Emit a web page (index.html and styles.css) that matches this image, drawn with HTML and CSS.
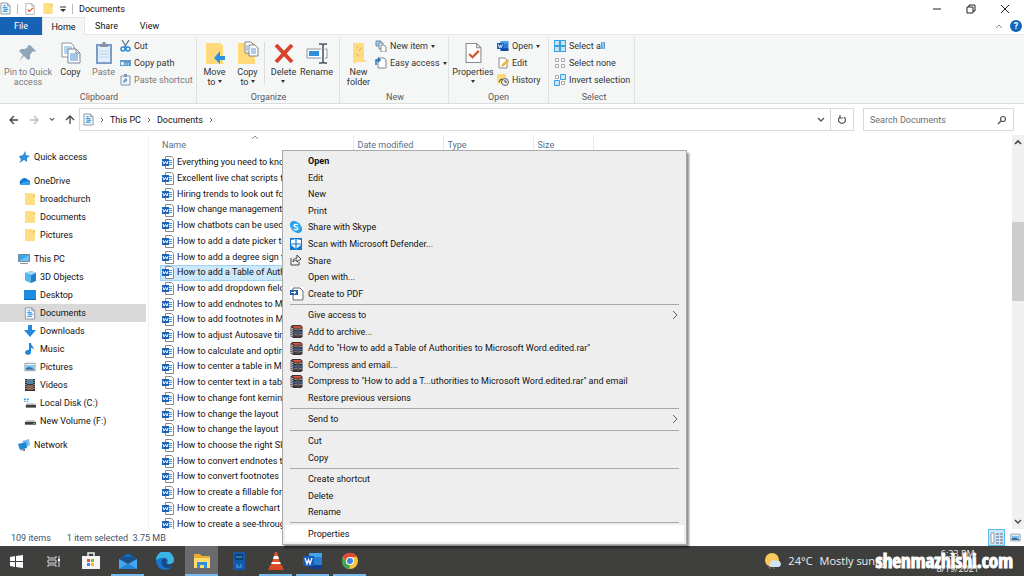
FILE: index.html
```html
<!DOCTYPE html>
<html lang="en">
<head>
    <meta charset="UTF-8">
    <meta name="viewport" content="width=device-width, initial-scale=1.0">
    <title>Documents</title>
    <link rel="stylesheet" href="styles.css">
</head>
<body>
    <!-- Shared icons -->
    <svg class="sprite" aria-hidden="true">
        <symbol id="i-doc" viewBox="0 0 12 14">
            <path d="M1 1h7l3 3v9H1z" fill="#f4f8fb" stroke="#8b949b"/>
            <path d="M8 1v3h3" fill="none" stroke="#8b949b"/>
            <path d="M3 6h5M4 8h5M3 10h5M4 4h2" stroke="#4aa3df" stroke-width="1.4"/>
        </symbol>
        <symbol id="i-check" viewBox="0 0 16 20">
            <path d="M1 1h10l4 4v14H1z" fill="#fff" stroke="#8a8a8a"/>
            <path d="M11 1v4h4" fill="none" stroke="#8a8a8a"/>
            <path d="M4 11l3 3 6-6" fill="none" stroke="#d6502a" stroke-width="2"/>
        </symbol>
        <symbol id="i-folder" viewBox="0 0 12 14">
            <path d="M1 1h8v1h2v11H1z" fill="#ffdf85"/>
            <path d="M9 2h2v3H9z" fill="#f3cb62"/>
        </symbol>
        <symbol id="i-word" viewBox="0 0 12 13">
            <path d="M3.500.500h6l2 2v10h-8z" fill="#fff" stroke="#858b91"/>
            <path d="M7 4.500h3M7 6.500h3M7 8.500h3" stroke="#4f9be0"/>
            <path d="M0 3h7v7H0z" fill="#1d62b7"/>
            <path d="M1 5l1 3 1.500-2.500L5 8l1-3" fill="none" stroke="#fff"/>
        </symbol>
        <symbol id="i-wordapp" viewBox="0 0 20 16">
            <path d="M6 0h13v16H6z" fill="#2b7cd3"/>
            <path d="M6 0h13v4H6z" fill="#41a5ee"/>
            <path d="M6 12h13v4H6z" fill="#103f91"/>
            <path d="M0 3h11v10H0z" fill="#185abd"/>
            <path d="M2 5l2 6 1.500-4.500L7 11l2-6" fill="none" stroke="#fff" stroke-width="1.300"/>
        </symbol>
        <symbol id="i-pages" viewBox="0 0 20 22">
            <path d="M1 1h9l3 3v11H1z" fill="#fff" stroke="#8996a3"/>
            <path d="M3 5h8M3 7h8M3 9h8M3 11h8" stroke="#6fa8dc"/>
            <path d="M7 7h8l4 4v10H7z" fill="#fff" stroke="#788694"/>
            <path d="M15 7v4h4" fill="none" stroke="#788694"/>
            <path d="M9 12h8M9 14h8M9 16h8M9 18h8" stroke="#4c90d0"/>
        </symbol>
        <symbol id="i-rar" viewBox="0 0 13 14">
            <path d="M2 0h9l2 2v11l-2 1H3L0 12V2z" fill="#3a3034"/>
            <path d="M2 1h9l1 2H4z" fill="#e2553c"/>
            <path d="M4 4h9v1H4z" fill="#c9a9a5"/>
            <path d="M4 7h9v2H4z" fill="#2f6fc0"/>
            <path d="M4 10h9v1H4z" fill="#9a9a9a"/>
            <path d="M0 3l3 1M0 5l3 1M0 7l3 1M0 9l3 1M0 11l3 1" stroke="#ddd"/>
            <path d="M7 3h2v10H7z" fill="#65503d"/>
        </symbol>
        <symbol id="i-picture" viewBox="0 0 13 10">
            <path d="M1 1h11v8H1z" fill="#eaf5fc" stroke="#8b949b"/>
            <path d="M2 3h9v3H2z" fill="#7cc4ee"/>
            <path d="M2 8V6l4-1 5 2v1z" fill="#386a9c"/>
        </symbol>
        <symbol id="i-disk" viewBox="0 0 13 10">
            <path d="M3 4h8l2 3H1z" fill="#c9c9c9"/>
            <path d="M1 6h12v3H1z" fill="#3d3d3d"/>
            <path d="M10 7h2v1h-2z" fill="#9fd7a8"/>
        </symbol>
        <symbol id="i-chevron" viewBox="0 0 6 6">
            <path d="M2 1l2 2-2 2" fill="none" stroke="#555"/>
        </symbol>
        <symbol id="i-down" viewBox="0 0 8 6">
            <path d="M1 1l3 3 3-3" fill="none" stroke="currentColor" stroke-width="1.400"/>
        </symbol>
        <symbol id="i-arrow" viewBox="0 0 10 10">
            <path d="M9 5H1M5 1L1 5l4 4" fill="none" stroke="currentColor" stroke-width="1.300"/>
        </symbol>
        <symbol id="i-submenu" viewBox="0 0 6 10">
            <path d="M1 1l4 4-4 4" fill="none" stroke="#666"/>
        </symbol>
    </svg>

    <div class="window">
        <header class="titlebar">
            <svg width="11" height="13"><use href="#i-doc"/></svg>
            <span class="divider"></span>
            <svg width="12" height="12"><use href="#i-check"/></svg>
            <svg width="12" height="13"><use href="#i-folder"/></svg>
            <svg width="6" height="6" viewBox="0 0 6 6"><path d="M0 1h6" stroke="#333"/><path d="M0 3h6L3 6z" fill="#333"/></svg>
            <span class="divider"></span>
            <h1>Documents</h1>
            <div class="window-controls">
                <button type="button" aria-label="Minimize"><svg width="10" height="10"><path d="M1 5h8" stroke="#222"/></svg></button>
                <button type="button" aria-label="Restore"><svg width="10" height="10"><path d="M1 3h6v6H1zM3 3V1h6v6H7" fill="none" stroke="#222"/></svg></button>
                <button type="button" aria-label="Close"><svg width="10" height="10"><path d="M1 1l8 8M9 1L1 9" stroke="#222"/></svg></button>
            </div>
        </header>

        <nav class="tabs">
            <button type="button" class="tab tab-file">File</button>
            <button type="button" class="tab tab-active">Home</button>
            <button type="button" class="tab">Share</button>
            <button type="button" class="tab">View</button>
            <div class="tabs-end">
                <svg width="8" height="6" viewBox="0 0 8 6"><path d="M1 5l3-3 3 3" fill="none" stroke="#888"/></svg>
                <button type="button" class="help" aria-label="Help">?</button>
            </div>
        </nav>

        <div class="ribbon">
            <section class="group group-clipboard">
                <div class="tools">
                    <button type="button" class="big muted big-wide">
                        <svg width="20" height="22" viewBox="0 0 20 22"><path d="M12 3l6 6-2 1-1-1-3 4v4l-2 1-4-4-5 5 4-6-4-4 2-2h4l3-2-1-1z" fill="#8fa5ba"/></svg>
                        <span>Pin to Quick<br>access</span>
                    </button>
                    <button type="button" class="big">
                        <svg width="20" height="22"><use href="#i-pages"/></svg>
                        <span>Copy</span>
                    </button>
                    <button type="button" class="big muted">
                        <svg width="18" height="22" viewBox="0 0 18 22"><path d="M2 3h14v18H2z" fill="#e3effa" stroke="#7b9cc4" stroke-width="2"/><path d="M5 2h2l1-2h2l1 2h2v3H5z" fill="#8393a3"/><path d="M4 9h10M4 12h10M4 15h10" stroke="#bcd6ee"/></svg>
                        <span>Paste</span>
                    </button>
                    <div class="small-tools">
                        <button type="button" class="small">
                            <svg width="11" height="12" viewBox="0 0 11 12"><path d="M2 0l5 8M9 0L4 8" stroke="#667788" stroke-width="1.300"/><circle cx="3" cy="9" r="2" fill="none" stroke="#2889d6" stroke-width="1.500"/><circle cx="8" cy="9" r="2" fill="none" stroke="#2889d6" stroke-width="1.500"/></svg>
                            Cut
                        </button>
                        <button type="button" class="small">
                            <svg width="11" height="12" viewBox="0 0 11 12"><path d="M0 3h11v6H0z" fill="#5c9ccc"/><path d="M1 5l1 3 1-3 1 3M6 7h1M8 7h1" fill="none" stroke="#fff"/></svg>
                            Copy path
                        </button>
                        <button type="button" class="small muted">
                            <svg width="11" height="12" viewBox="0 0 11 12"><path d="M1 2h9v9H1z" fill="#eef5fb" stroke="#7b95ae"/><path d="M4 0h3v3H4z" fill="#7b95ae"/><path d="M4 9V6h3M5 4l2 2-2 2" fill="none" stroke="#4c82b6"/></svg>
                            Paste shortcut
                        </button>
                    </div>
                </div>
                <h2>Clipboard</h2>
            </section>

            <section class="group group-organize">
                <div class="tools">
                    <button type="button" class="big">
                        <svg width="22" height="24" viewBox="0 0 22 24"><path d="M2 2h15v2h2v19H2z" fill="#ffd97a"/><path d="M21 15h-5v-5l-6 7 6 6v-4h5z" fill="#2f93e0"/></svg>
                        <span>Move<br>to <i class="caret"></i></span>
                    </button>
                    <button type="button" class="big">
                        <svg width="22" height="24" viewBox="0 0 22 24"><path d="M1 2h17v21H1z" fill="#ffd97a"/><path d="M8 1h6l2 2v9H8z" fill="#fff" stroke="#788694"/><path d="M12 4h6l3 3v8h-9z" fill="#fff" stroke="#788694"/><path d="M14 8h5M14 10h5M14 12h5M9 5h2M9 7h2M9 9h2" stroke="#5c9cd6"/></svg>
                        <span>Copy<br>to <i class="caret"></i></span>
                    </button>
                    <span class="tool-divider"></span>
                    <button type="button" class="big">
                        <svg width="20" height="22" viewBox="0 0 20 22"><path d="M2 3l16 17M18 3L2 20" stroke="#d8442b" stroke-width="4"/></svg>
                        <span>Delete<br><i class="caret"></i></span>
                    </button>
                    <button type="button" class="big">
                        <svg width="22" height="22" viewBox="0 0 22 22"><path d="M15 7H1v9h14M19 7h2v9h-2" fill="#fff" stroke="#8696a5"/><path d="M3 9h10v5H3z" fill="#2f8fdd"/><path d="M13 2h3l1 1 1-1h3M13 21h3l1-1 1 1h3M17 3v17" fill="none" stroke="#45525e" stroke-width="1.500"/></svg>
                        <span>Rename</span>
                    </button>
                </div>
                <h2>Organize</h2>
            </section>

            <section class="group group-new">
                <div class="tools">
                    <button type="button" class="big">
                        <svg width="18" height="22" viewBox="0 0 18 22"><path d="M3 1h11v17h2v2h-9l-2 2-2-2z" fill="#ffdc83"/><path d="M6 4l2 2M11 6l-2 3M6 12l3 2" stroke="#dcae4f"/></svg>
                        <span>New<br>folder</span>
                    </button>
                    <div class="small-tools">
                        <button type="button" class="small">
                            <svg width="12" height="12" viewBox="0 0 12 12"><path d="M1 1h5v5H1z" fill="#a8cbea" stroke="#6d8dad"/><path d="M4 3h4v6H4z" fill="#fff" stroke="#6d8dad"/><path d="M6 5h3l2 2v5H6z" fill="#fff" stroke="#788694"/></svg>
                            New item <i class="caret"></i>
                        </button>
                        <button type="button" class="small">
                            <svg width="12" height="12" viewBox="0 0 12 12"><path d="M3 1h6l2 2v8H3z" fill="#fff" stroke="#788694"/><path d="M1 8V3h4M3 1l2 2-2 2" fill="none" stroke="#2474bd" stroke-width="1.500"/></svg>
                            Easy access <i class="caret"></i>
                        </button>
                    </div>
                </div>
                <h2>New</h2>
            </section>

            <section class="group group-open">
                <div class="tools">
                    <button type="button" class="big big-medium">
                        <svg width="17" height="22"><use href="#i-check"/></svg>
                        <span>Properties<br><i class="caret"></i></span>
                    </button>
                    <div class="small-tools">
                        <button type="button" class="small">
                            <svg width="12" height="12"><use href="#i-wordapp"/></svg>
                            Open <i class="caret"></i>
                        </button>
                        <button type="button" class="small">
                            <svg width="12" height="12" viewBox="0 0 12 12"><path d="M2 1h6l2 2v8H2z" fill="#fff" stroke="#8a8a8a"/><path d="M4 10l1-3 6-5 1 2-5 5z" fill="#efb63c"/></svg>
                            Edit
                        </button>
                        <button type="button" class="small">
                            <svg width="12" height="12" viewBox="0 0 12 12"><path d="M0 0h9v10H0z" fill="#ffda7b"/><circle cx="8" cy="8" r="3.500" fill="#e8e8e8" stroke="#666"/><path d="M8 6v2h2M2 8l2-3 2 1" fill="none" stroke="#444"/></svg>
                            History
                        </button>
                    </div>
                </div>
                <h2>Open</h2>
            </section>

            <section class="group group-select">
                <div class="tools">
                    <div class="small-tools">
                        <button type="button" class="small">
                            <svg width="12" height="12" viewBox="0 0 12 12"><path d="M0 0h12v12H0z" fill="#3aa0e0"/><path d="M1 1h4v4H1zM7 1h4v4H7zM1 7h4v4H1zM7 7h4v4H7z" fill="#c6e6f8"/></svg>
                            Select all
                        </button>
                        <button type="button" class="small">
                            <svg width="12" height="12" viewBox="0 0 12 12"><path d="M1.500 1.500h3v3h-3zM7.500 1.500h3v3h-3zM1.500 7.500h3v3h-3zM7.500 7.500h3v3h-3z" fill="#fff" stroke="#aaa"/></svg>
                            Select none
                        </button>
                        <button type="button" class="small">
                            <svg width="12" height="12" viewBox="0 0 12 12"><path d="M1.500 1.500h3v3h-3zM7.500 7.500h3v3h-3z" fill="#fff" stroke="#aaa"/><path d="M6.500.500h5v5h-5zM.500 6.500h5v5h-5z" fill="#c6e6f8" stroke="#3aa0e0"/></svg>
                            Invert selection
                        </button>
                    </div>
                </div>
                <h2>Select</h2>
            </section>
        </div>

        <div class="address-row">
            <div class="history">
                <button type="button" aria-label="Back"><svg width="10" height="10"><use href="#i-arrow"/></svg></button>
                <button type="button" class="faded" aria-label="Forward"><svg class="flip" width="10" height="10"><use href="#i-arrow"/></svg></button>
                <button type="button" aria-label="Recent locations"><svg width="6" height="5"><use href="#i-down"/></svg></button>
                <button type="button" aria-label="Up"><svg class="up" width="10" height="10"><use href="#i-arrow"/></svg></button>
            </div>
            <div class="address">
                <svg width="11" height="13"><use href="#i-doc"/></svg>
                <svg width="6" height="6"><use href="#i-chevron"/></svg>
                <a href="#">This PC</a>
                <svg width="6" height="6"><use href="#i-chevron"/></svg>
                <a href="#">Documents</a>
                <svg width="6" height="6"><use href="#i-chevron"/></svg>
                <button type="button" class="address-drop" aria-label="Previous locations"><svg width="8" height="6"><use href="#i-down"/></svg></button>
                <button type="button" class="refresh" aria-label="Refresh"><svg width="10" height="10" viewBox="0 0 10 10"><path d="M7 2a3.500 3.500 0 1 1-4 0M3 0v3h3" fill="none" stroke="#555" stroke-width="1.200"/></svg></button>
            </div>
            <label class="search">
                <input type="search" placeholder="Search Documents" aria-label="Search Documents">
                <svg width="10" height="10" viewBox="0 0 10 10"><circle cx="6" cy="4" r="2.500" fill="none" stroke="#555" stroke-width="1.200"/><path d="M4 6L1 9" stroke="#555" stroke-width="1.500"/></svg>
            </label>
        </div>

        <main class="explorer">
            <nav class="tree">
                <ul>
                    <li><a href="#"><svg width="12" height="12" viewBox="0 0 12 12"><path d="M7 0l1 4 4 1-3 2 0 4-3-2-3 2-2 1 2-3-2-4 4-1z" fill="#2f8fdd"/></svg>Quick access</a></li>
                </ul>
                <ul>
                    <li><a href="#"><svg width="12" height="12" viewBox="0 0 12 12"><path d="M3 10a3 3 0 0 1 0-5 4 4 0 0 1 7 0 2.500 2.500 0 0 1 0 5z" fill="#1378cf"/><path d="M5 7l5-1a2 2 0 0 1 0 4H2z" fill="#33a2ec"/></svg>OneDrive</a></li>
                    <li class="child"><a href="#"><svg width="12" height="14"><use href="#i-folder"/></svg>broadchurch</a></li>
                    <li class="child"><a href="#"><svg width="12" height="14"><use href="#i-folder"/></svg>Documents</a></li>
                    <li class="child"><a href="#"><svg width="12" height="14"><use href="#i-folder"/></svg>Pictures</a></li>
                </ul>
                <ul>
                    <li><a href="#"><svg width="12" height="12" viewBox="0 0 12 12"><path d="M0 1h12v8H0z" fill="#7c8c98"/><path d="M1 2h10v6H1z" fill="#37a6ec"/><path d="M1 8l10-6v6z" fill="#6dc2f5"/><path d="M2 10h8v1H2z" fill="#8b98a3"/></svg>This PC</a></li>
                    <li class="child"><a href="#"><svg width="12" height="12" viewBox="0 0 12 12"><path d="M1 2l6-2 5 2v8l-5 2-6-3z" fill="#1f83cb"/><path d="M1 2l6-2 5 2-5 2z" fill="#a4dcf8"/><path d="M1 2l6 2v8L1 9z" fill="#56b5ea"/></svg>3D Objects</a></li>
                    <li class="child"><a href="#"><svg width="12" height="12" viewBox="0 0 12 12"><path d="M0 1h12v10H0z" fill="#1d8ce0"/><path d="M0 10h12v1H0z" fill="#1464a8"/></svg>Desktop</a></li>
                    <li class="child selected"><a href="#"><svg width="12" height="13"><use href="#i-doc"/></svg>Documents</a></li>
                    <li class="child"><a href="#"><svg width="12" height="12" viewBox="0 0 12 12"><path d="M4 0h4v5h4l-6 7-6-7h4z" fill="#2787d8"/></svg>Downloads</a></li>
                    <li class="child"><a href="#"><svg width="12" height="12" viewBox="0 0 12 12"><path d="M5 0h2c0 3 3 3 3 7-1-2-2-2-3-2v4a3 2.500 0 1 1-2-2z" fill="#2088da"/></svg>Music</a></li>
                    <li class="child"><a href="#"><svg width="12" height="10"><use href="#i-picture"/></svg>Pictures</a></li>
                    <li class="child"><a href="#"><svg width="12" height="12" viewBox="0 0 12 12"><path d="M1 0h10v12H1z" fill="#333"/><path d="M3 0h6v5H3z" fill="#5383a8"/><path d="M3 6h6v5H3z" fill="#8d6653"/><path d="M2 1v10M10 1v10" stroke="#ccc" stroke-dasharray="1 1"/></svg>Videos</a></li>
                    <li class="child"><a href="#"><svg width="12" height="12" viewBox="0 0 13 12"><path d="M0 1h2v2H0zM3 1h2v2H3zM0 4h2v1H0zM3 4h2v1H3z" fill="#26a0e6"/><path d="M3 6h8l2 2H2z" fill="#c9c9c9"/><path d="M2 8h11v3H2z" fill="#3d3d3d"/></svg>Local Disk (C:)</a></li>
                    <li class="child"><a href="#"><svg width="12" height="10"><use href="#i-disk"/></svg>New Volume (F:)</a></li>
                </ul>
                <ul>
                    <li><a href="#"><svg width="12" height="12" viewBox="0 0 12 12"><path d="M4 2l7-2 1 6-3 2z" fill="#80bce8"/><path d="M0 5l8-2 1 6-7 2z" fill="#1f86d0"/><path d="M2 11l5-1v2z" fill="#667"/></svg>Network</a></li>
                </ul>
            </nav>

            <div class="files">
                <svg class="sort" width="8" height="6" viewBox="0 0 8 6"><path d="M1 4l3-3 3 3" fill="none" stroke="#888"/></svg>
                <table>
                    <colgroup>
                        <col class="col-name">
                        <col class="col-date">
                        <col class="col-date">
                        <col class="col-size">
                    </colgroup>
                    <thead>
                        <tr><th>Name</th><th>Date modified</th><th>Type</th><th>Size</th></tr>
                    </thead>
                    <tbody>
                        <tr><td><svg width="12" height="13"><use href="#i-word"/></svg>Everything you need to know</td></tr>
                        <tr><td><svg width="12" height="13"><use href="#i-word"/></svg>Excellent live chat scripts for</td></tr>
                        <tr><td><svg width="12" height="13"><use href="#i-word"/></svg>Hiring trends to look out for</td></tr>
                        <tr><td><svg width="12" height="13"><use href="#i-word"/></svg>How change management</td></tr>
                        <tr><td><svg width="12" height="13"><use href="#i-word"/></svg>How chatbots can be used</td></tr>
                        <tr><td><svg width="12" height="13"><use href="#i-word"/></svg>How to add a date picker to</td></tr>
                        <tr><td><svg width="12" height="13"><use href="#i-word"/></svg>How to add a degree sign to</td></tr>
                        <tr class="selected"><td><svg width="12" height="13"><use href="#i-word"/></svg>How to add a Table of Authorities</td></tr>
                        <tr><td><svg width="12" height="13"><use href="#i-word"/></svg>How to add dropdown fields</td></tr>
                        <tr><td><svg width="12" height="13"><use href="#i-word"/></svg>How to add endnotes to Microsoft</td></tr>
                        <tr><td><svg width="12" height="13"><use href="#i-word"/></svg>How to add footnotes in Microsoft</td></tr>
                        <tr><td><svg width="12" height="13"><use href="#i-word"/></svg>How to adjust Autosave time</td></tr>
                        <tr><td><svg width="12" height="13"><use href="#i-word"/></svg>How to calculate and optimize</td></tr>
                        <tr><td><svg width="12" height="13"><use href="#i-word"/></svg>How to center a table in Microsoft</td></tr>
                        <tr><td><svg width="12" height="13"><use href="#i-word"/></svg>How to center text in a table</td></tr>
                        <tr><td><svg width="12" height="13"><use href="#i-word"/></svg>How to change font kerning</td></tr>
                        <tr><td><svg width="12" height="13"><use href="#i-word"/></svg>How to change the layout</td></tr>
                        <tr><td><svg width="12" height="13"><use href="#i-word"/></svg>How to change the layout</td></tr>
                        <tr><td><svg width="12" height="13"><use href="#i-word"/></svg>How to choose the right SIM</td></tr>
                        <tr><td><svg width="12" height="13"><use href="#i-word"/></svg>How to convert endnotes to</td></tr>
                        <tr><td><svg width="12" height="13"><use href="#i-word"/></svg>How to convert footnotes</td></tr>
                        <tr><td><svg width="12" height="13"><use href="#i-word"/></svg>How to create a fillable form</td></tr>
                        <tr><td><svg width="12" height="13"><use href="#i-word"/></svg>How to create a flowchart</td></tr>
                        <tr><td><svg width="12" height="13"><use href="#i-word"/></svg>How to create a see-through</td></tr>
                    </tbody>
                </table>
            </div>

            <div class="scrollbar">
                <svg width="8" height="6" viewBox="0 0 8 6"><path d="M1 5l3-3 3 3" fill="none" stroke="#444" stroke-width="1.600"/></svg>
                <div class="track"><div class="thumb"></div></div>
                <svg width="8" height="6"><use href="#i-down"/></svg>
            </div>
        </main>

        <footer class="status">
            <span>109 items</span>
            <span>1 item selected&nbsp; 3.75 MB</span>
            <div class="views">
                <button type="button" class="view view-active" aria-label="Details"><svg width="13" height="12" viewBox="0 0 13 12"><path d="M1 1h3v10H1z" fill="#fff" stroke="#999"/><path d="M6 2h3M6 5h3M6 8h3M6 11h3M10 2h3M10 5h3M10 8h3M10 11h3" stroke="#667"/></svg></button>
                <button type="button" class="view" aria-label="Large icons"><svg width="11" height="9"><use href="#i-picture"/></svg></button>
            </div>
        </footer>
    </div>

    <ul class="menu">
        <li><button type="button"><b>Open</b></button></li>
        <li><button type="button">Edit</button></li>
        <li><button type="button">New</button></li>
        <li><button type="button">Print</button></li>
        <li><button type="button"><svg width="12" height="12" viewBox="0 0 12 12"><circle cx="4" cy="4" r="4" fill="#1f9be8"/><circle cx="8" cy="8" r="4" fill="#1f9be8"/><circle cx="6" cy="6" r="5" fill="#31a9f0"/><path d="M8 4c-1-1-4-1-4 .500S8 6 8 7.500 5 9 4 8" fill="none" stroke="#fff" stroke-width="1.300"/></svg>Share with Skype</button></li>
        <li><button type="button"><svg width="12" height="12" viewBox="0 0 12 12"><path d="M0 0h12v12H0z" fill="#1079d4"/><path d="M1 2l5-1 5 1v5l-5 4-5-4z" fill="#fff"/><path d="M6 1v10M1 6h10" stroke="#1079d4" stroke-width="1.200"/></svg>Scan with Microsoft Defender...</button></li>
        <li><button type="button"><svg width="12" height="12" viewBox="0 0 12 12"><path d="M1 4v7h8V8M3 8c0-3 2-4 4-4V1l4 4-4 3V6C5 6 4 7 3 8z" fill="none" stroke="#444"/></svg>Share</button></li>
        <li><button type="button">Open with...</button></li>
        <li><button type="button"><svg width="14" height="14" viewBox="0 0 14 14"><path d="M0 0h14v14H0z" fill="#fff"/><path d="M3 1h7l3 3v9H3z" fill="#fff" stroke="#666"/><path d="M0 3h8v5H0z" fill="#1d5ca8"/><path d="M1 5.500h5M4 4l2 1.500L4 7" fill="none" stroke="#fff"/></svg>Create to PDF</button></li>
        <li class="separator"></li>
        <li><button type="button">Give access to<svg class="submenu" width="6" height="10"><use href="#i-submenu"/></svg></button></li>
        <li><button type="button"><svg width="13" height="13"><use href="#i-rar"/></svg>Add to archive...</button></li>
        <li><button type="button"><svg width="13" height="13"><use href="#i-rar"/></svg>Add to "How to add a Table of Authorities to Microsoft Word.edited.rar"</button></li>
        <li><button type="button"><svg width="13" height="13"><use href="#i-rar"/></svg>Compress and email...</button></li>
        <li><button type="button"><svg width="13" height="13"><use href="#i-rar"/></svg>Compress to "How to add a T...uthorities to Microsoft Word.edited.rar" and email</button></li>
        <li><button type="button">Restore previous versions</button></li>
        <li class="separator"></li>
        <li><button type="button">Send to<svg class="submenu" width="6" height="10"><use href="#i-submenu"/></svg></button></li>
        <li class="separator"></li>
        <li><button type="button">Cut</button></li>
        <li><button type="button">Copy</button></li>
        <li class="separator"></li>
        <li><button type="button">Create shortcut</button></li>
        <li><button type="button">Delete</button></li>
        <li><button type="button">Rename</button></li>
        <li class="separator"></li>
        <li class="hovered"><button type="button">Properties</button></li>
    </ul>

    <div class="taskbar">
        <button type="button" class="app" aria-label="Start"><svg width="13" height="13" viewBox="0 0 13 13"><path d="M0 2l5-1v5H0zM6 1l7-1v6H6zM0 7h5v5l-5-1zM6 7h7v6l-7-1z" fill="#fff"/></svg></button>
        <button type="button" class="app" aria-label="Task view"><svg width="13" height="13" viewBox="0 0 13 13"><path d="M1 1v2h8V1M1 12v-2h8v2M1 5h8v3H1zM12 1v11" fill="none" stroke="#ddd"/><path d="M11 4h2v2h-2z" fill="#fff"/></svg></button>
        <button type="button" class="app" aria-label="Store"><svg width="18" height="18" viewBox="0 0 18 18"><path d="M6 5V1h6v4" fill="none" stroke="#eee" stroke-width="1.500"/><path d="M0 4h18v13H0z" fill="#f4f4f4"/><path d="M5 7h3v3H5z" fill="#e2552c"/><path d="M9 7h3v3H9z" fill="#7db72f"/><path d="M5 11h3v3H5z" fill="#2a94d8"/><path d="M9 11h3v3H9z" fill="#f2b42b"/></svg></button>
        <button type="button" class="app running" aria-label="Mail"><svg width="18" height="16" viewBox="0 0 18 16"><path d="M0 6l9-6 9 6z" fill="#1667b8"/><path d="M2 4h14v5H2z" fill="#174f91"/><path d="M0 6l9 5 9-5v10H0z" fill="#42a8ef"/><path d="M0 16l9-6 9 6z" fill="#2383d6"/></svg></button>
        <button type="button" class="app" aria-label="Edge"><svg width="18" height="18" viewBox="0 0 18 18"><circle cx="9" cy="9" r="9" fill="#1a74cc"/><path d="M0 8a9 9 0 0 1 18 0c0 3-2 4-5 4-2 0-2-1-1-3 0-3-6-5-12-1z" fill="#3bb5e6"/><path d="M6 8c-2 4 1 9 7 8 2 0 3-2 3-3-3 2-6 0-6-3 0-1 1-2 0-3s-3-1-4 1z" fill="#114b91"/><path d="M9 7c2 0 2 2 1 3 0 2 2 3 5 2l3-2v4l-4 0c-3 0-5-2-5-4z" fill="#3f3f3f"/></svg></button>
        <button type="button" class="app running current" aria-label="File Explorer"><svg width="18" height="16" viewBox="0 0 18 16"><path d="M1 1h6l2 2h8v12H1z" fill="#e9ad2d"/><path d="M1 5h16v10H1z" fill="#ffdb71"/><path d="M4 9h10v6h-3v-3H7v3H4z" fill="#2b91dd"/></svg></button>
        <button type="button" class="app" aria-label="Notes"><svg width="14" height="18" viewBox="0 0 14 18"><path d="M1 0h12v18H1z" fill="#135aa6"/><path d="M3 2h8v6H3z" fill="#0e3f77"/><path d="M4 5h6M4 13h2M8 13h2M4 15h6" stroke="#5aa9e8"/></svg></button>
        <button type="button" class="app running" aria-label="VLC"><svg width="16" height="18" viewBox="0 0 16 18"><path d="M7 0h2l4 14H3z" fill="#e5542b"/><path d="M6 4h4l1 3H5zM4 10h8l1 2H3z" fill="#fff"/><path d="M2 13h12l2 5H0z" fill="#d84b26"/></svg></button>
        <button type="button" class="app running" aria-label="Word"><svg width="20" height="16"><use href="#i-wordapp"/></svg></button>
        <button type="button" class="app running" aria-label="Chrome"><svg width="18" height="18" viewBox="0 0 18 18"><circle cx="9" cy="9" r="8" fill="#f5c63b"/><path d="M2 5a8 8 0 0 1 14 0H9L6 11z" fill="#df4b37"/><path d="M2 5l4 7 3 1-1 4A8 8 0 0 1 2 5z" fill="#3fa558"/><circle cx="9" cy="9" r="4" fill="#fff"/><circle cx="9" cy="9" r="3" fill="#3c86e0"/></svg></button>

        <div class="tray">
            <svg width="16" height="16" viewBox="0 0 16 16"><circle cx="7" cy="7" r="7" fill="#fbc95b"/><path d="M6 14a3 3 0 0 1 0-5 3 3 0 0 1 5-1 3 3 0 0 1 3 6z" fill="#cfe4f7"/><path d="M4 14l1 2M8 14l1 2" stroke="#e0603c"/></svg>
            <span>24°C</span>
            <span class="weather">Mostly sunny</span>
            <div class="clock">6:33 PM<br>8/19/2021</div>
        </div>
        <span class="watermark">shenmazhishi.com</span>
    </div>
</body>
</html>
```

FILE: styles.css
```css
* {
    box-sizing: border-box;
}
body {
    display: flex;
    flex-direction: column;
    height: 100vh;
    margin: 0;
    overflow: hidden;
    background-color: #fff;
    color: #111;
    font-family: Roboto, "Open Sans", sans-serif;
    font-size: 9px;
    line-height: 12px;
}
h1, h2 {
    margin: 0;
    font-size: 9px;
    font-weight: normal;
}
ul {
    margin: 0;
    padding: 0;
    list-style: none;
}
a {
    color: inherit;
    text-decoration: none;
}
button {
    padding: 0;
    border: none;
    background: none;
    color: inherit;
    font: inherit;
}
svg {
    display: block;
    flex: none;
}
.sprite {
    position: absolute;
    width: 0;
    height: 0;
}
.window {
    display: flex;
    flex: 1;
    flex-direction: column;
    min-height: 0;
}

/* Title bar and tabs */
.titlebar {
    display: flex;
    align-items: center;
    gap: 6px;
    height: 17px;
}
.divider {
    width: 1px;
    height: 10px;
    background-color: #bbb;
}
.window-controls {
    display: flex;
    gap: 24px;
    margin-left: auto;
    padding-right: 14px;
}
.tabs {
    display: flex;
    height: 18px;
    border-bottom: 1px solid #e4e6e6;
}
.tab {
    width: 43px;
    height: 18px;
}
.tab-file {
    width: 42px;
    background-color: #1663b5;
    color: #fff;
}
.tab-active {
    border: 1px solid #e4e6e6;
    border-bottom: none;
    background-color: #f5f7f7;
}
.tabs-end {
    display: flex;
    align-items: center;
    gap: 7px;
    margin-left: auto;
    padding-right: 2px;
}
.help {
    width: 12px;
    height: 12px;
    border-radius: 50%;
    background-color: #1267bd;
    color: #fff;
    font-weight: bold;
    line-height: 12px;
}

/* Ribbon */
.ribbon {
    display: flex;
    height: 69px;
    padding-top: 2px;
    border-bottom: 1px solid #dcdede;
    background-color: #f5f7f7;
    color: #333;
}
.group {
    display: flex;
    flex-direction: column;
    justify-content: space-between;
    border-right: 1px solid #e1e3e3;
}
.group h2 {
    color: #5a5a5a;
    text-align: center;
}
.group-clipboard {
    width: 197px;
    padding-left: 2px;
}
.group-organize {
    width: 143px;
    padding-left: 1px;
}
.group-new {
    width: 109px;
    padding-left: 2px;
}
.group-open {
    width: 100px;
}
.group-select {
    width: 86px;
    padding-left: 5px;
}
.tools {
    display: flex;
}
.big {
    display: flex;
    flex-direction: column;
    align-items: center;
    width: 33px;
    line-height: 10px;
    white-space: nowrap;
}
.big svg {
    height: 24px;
    margin: 4px 0 2px;
}
.big-medium {
    width: 48px;
}
.big-wide {
    width: 52px;
}
.muted {
    color: #777;
}
.tool-divider {
    width: 1px;
    height: 42px;
    margin: 5px 2px 0 0;
    background-color: #dcdede;
}
.small-tools {
    display: flex;
    flex-direction: column;
    gap: 5px;
    padding-top: 3px;
}
.small {
    display: flex;
    align-items: center;
    gap: 3px;
    white-space: nowrap;
}
.caret {
    display: inline-block;
    border: 2px solid transparent;
    border-top: 3px solid #333;
    border-bottom: none;
    vertical-align: 2px;
}

/* Address row */
.address-row {
    display: flex;
    gap: 9px;
    padding: 4px 10px 4px 9px;
}
.history {
    display: flex;
    flex: none;
    align-items: center;
    justify-content: space-between;
    width: 66px;
    color: #444;
}
.faded {
    color: #bbb;
}
.flip {
    transform: rotate(180deg);
}
.up {
    transform: rotate(90deg);
}
.address {
    display: flex;
    flex: 1;
    align-items: center;
    gap: 5px;
    height: 23px;
    margin-left: -5px;
    padding-left: 3px;
    border: 1px solid #d9d9d9;
}
.address-drop {
    margin-left: auto;
    color: #555;
}
.refresh {
    display: flex;
    align-items: center;
    justify-content: center;
    width: 23px;
    height: 21px;
    border-left: 1px solid #d9d9d9;
}
.search {
    display: flex;
    align-items: center;
    width: 151px;
    padding: 0 6px;
    border: 1px solid #d9d9d9;
}
.search input {
    flex: 1;
    min-width: 0;
    padding: 0;
    border: none;
    outline: none;
    background: none;
    font: inherit;
}
.search input::placeholder {
    color: #6d6d6d;
}

/* Explorer */
.explorer {
    display: flex;
    flex: 1;
    min-height: 0;
}
.tree {
    display: flex;
    flex: none;
    flex-direction: column;
    gap: 6px;
    width: 149px;
    padding: 13px 2px 0 0;
    border-right: 1px solid #f3f3f3;
}
.tree a {
    display: flex;
    align-items: center;
    gap: 4px;
    height: 18px;
    padding-left: 18px;
    white-space: nowrap;
}
.tree .child a {
    padding-left: 24px;
}
.tree .selected {
    background-color: #d9d9d9;
}
.files {
    position: relative;
    flex: 1;
    overflow: hidden;
    padding-left: 11px;
}
.sort {
    position: absolute;
    top: 0;
    left: 102px;
}
table {
    width: 433px;
    height: 397px;
    border-collapse: collapse;
    table-layout: fixed;
}
.col-name {
    width: 193px;
}
.col-date {
    width: 90px;
}
.col-size {
    width: 60px;
}
th {
    height: 20px;
    padding: 4px 4px 0;
    border-right: 1px solid #e8e8e8;
    color: #5b6f88;
    font-weight: normal;
    text-align: left;
    vertical-align: top;
}
th:first-child {
    padding-left: 2px;
}
td {
    padding: 0 0 0 2px;
    overflow: hidden;
    white-space: nowrap;
}
td svg {
    display: inline-block;
    margin-right: 3px;
    vertical-align: middle;
}
tr.selected td {
    background-color: #cce8fb;
    outline: 1px solid #9ed2f5;
    outline-offset: -1px;
}
.scrollbar {
    display: flex;
    flex-direction: column;
    align-items: center;
    width: 12px;
    padding: 4px 0;
    background-color: #f0f0f0;
    color: #444;
}
.track {
    display: flex;
    flex: 1;
    flex-direction: column;
    align-self: stretch;
    padding-top: 77px;
}
.thumb {
    height: 79px;
    background-color: #cdcdcd;
}

/* Status bar */
.status {
    display: flex;
    align-items: center;
    gap: 16px;
    height: 17px;
    padding-left: 11px;
    color: #3d5068;
}
.views {
    display: flex;
    gap: 2px;
    margin-left: auto;
}
.view {
    display: flex;
    align-items: center;
    justify-content: center;
    width: 17px;
    height: 17px;
}
.view-active {
    border: 1px solid #5db9ee;
    background-color: #cbe8fb;
}

/* Context menu */
.menu {
    position: absolute;
    top: 150px;
    bottom: 31px;
    left: 282px;
    z-index: 1;
    display: flex;
    flex-direction: column;
    width: 405px;
    padding: 2px;
    border: 1px solid #a9a9a9;
    background-color: #eee;
    box-shadow: 2px 3px 2px rgba(0, 0, 0, 0.45);
}
.menu li {
    display: flex;
    flex: 1;
}
.menu button {
    position: relative;
    flex: 1;
    padding-left: 23px;
    text-align: left;
    white-space: nowrap;
}
.menu svg {
    position: absolute;
    top: 2px;
    left: 5px;
}
.menu .submenu {
    top: 3px;
    right: 6px;
    left: auto;
}
.menu .separator {
    flex: none;
    height: 1px;
    margin: 2px 5px;
    background-color: #a8a8a8;
}
.menu .hovered {
    background-color: #fff;
}

/* Taskbar */
.taskbar {
    position: relative;
    display: flex;
    gap: 4px;
    height: 30px;
    background-color: #3f3f3e;
    color: #eee;
}
.app {
    display: flex;
    align-items: center;
    justify-content: center;
    width: 33px;
    border: solid transparent;
    border-width: 2px 0;
}
.running {
    border-bottom-color: #76b9ed;
}
.current {
    background-color: #6b6b6f;
}
.tray {
    display: flex;
    align-items: center;
    gap: 7px;
    margin-left: auto;
    padding-right: 45px;
    font-family: "Open Sans", sans-serif;
    font-size: 11px;
}
.clock {
    margin-left: 42px;
    font-size: 9px;
    line-height: 15px;
    text-align: center;
}
.watermark {
    position: absolute;
    right: 11px;
    bottom: 6px;
    color: #fff;
    font-family: Impact, "Liberation Sans Narrow", "Open Sans Condensed", sans-serif;
    font-size: 19px;
    font-weight: bold;
    line-height: 18px;
    -webkit-text-stroke: 1px #fff;
}
```
